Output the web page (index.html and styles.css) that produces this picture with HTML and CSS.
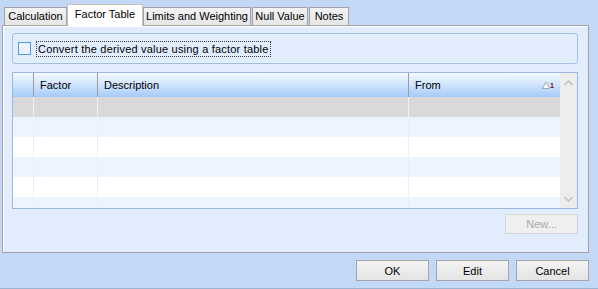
FILE: index.html
```html
<!DOCTYPE html>
<html lang="en">
<head>
    <meta charset="UTF-8">
    <title>Factor Table</title>
    <link rel="stylesheet" href="styles.css">
</head>
<body>
    <div class="window">
        <div class="tabs">
            <div class="tab tab-calc">Calculation</div>
            <div class="tab tab-factor selected">Factor Table</div>
            <div class="tab tab-limits">Limits and Weighting</div>
            <div class="tab tab-null">Null Value</div>
            <div class="tab tab-notes">Notes</div>
        </div>

        <div class="panel">
            <div class="group-box">
                <span class="check"></span>
                <span class="check-label">Convert the derived value using a factor table</span>
            </div>

            <div class="grid">
                <div class="grid-main">
                    <div class="grid-row grid-head">
                        <div class="cell"></div>
                        <div class="cell">Factor</div>
                        <div class="cell">Description</div>
                        <div class="cell cell-sort">
                            <span>From</span>
                            <span class="sort-mark">
                                <svg width="8" height="8" viewBox="0 0 8 8"><path d="M0.5 7.5 L4 1 L7.5 7.5 Z" fill="#fff" stroke="#a8a8a8" stroke-width="1"/></svg><span class="sort-num">1</span>
                            </span>
                        </div>
                    </div>
                    <!-- body rows -->
                    <div class="grid-row row-current"><div class="cell"></div><div class="cell"></div><div class="cell"></div><div class="cell"></div></div>
                    <div class="grid-row row-alt"><div class="cell"></div><div class="cell"></div><div class="cell"></div><div class="cell"></div></div>
                    <div class="grid-row"><div class="cell"></div><div class="cell"></div><div class="cell"></div><div class="cell"></div></div>
                    <div class="grid-row row-alt"><div class="cell"></div><div class="cell"></div><div class="cell"></div><div class="cell"></div></div>
                    <div class="grid-row"><div class="cell"></div><div class="cell"></div><div class="cell"></div><div class="cell"></div></div>
                    <div class="grid-row row-alt"><div class="cell"></div><div class="cell"></div><div class="cell"></div><div class="cell"></div></div>
                </div>
                <div class="vscroll">
                    <svg width="9" height="6" viewBox="0 0 9 6"><path d="M0.5 5 L4.5 1 L8.5 5" fill="none" stroke="#c3c3c3" stroke-width="1.6"/></svg>
                    <svg width="9" height="6" viewBox="0 0 9 6"><path d="M0.5 1 L4.5 5 L8.5 1" fill="none" stroke="#c3c3c3" stroke-width="1.6"/></svg>
                </div>
            </div>

            <div class="new-row">
                <button class="btn-new" disabled>New...</button>
            </div>
        </div>

        <div class="footer">
            <button class="btn">OK</button>
            <button class="btn">Edit</button>
            <button class="btn">Cancel</button>
        </div>
    </div>
</body>
</html>
```

FILE: styles.css
```css
body {
    margin: 0;
    background-color: #c3d8f7;
    font-family: "Liberation Sans", Arial, sans-serif;
    font-size: 11px;
    color: #000000;
}

.window {
    height: 289px;
    box-sizing: border-box;
    border-bottom: 1px solid #9bb3d0;
}

/* Tab strip */
.tabs {
    display: flex;
    align-items: flex-end;
    height: 25px;
    box-sizing: border-box;
    padding-left: 4px;
}

.tab {
    height: 18px;
    box-sizing: border-box;
    border: 1px solid #a3a3a3;
    border-bottom: none;
    background: linear-gradient(#f3f3f3, #e6e6e6);
    text-align: center;
    line-height: 17px;
}

.tab.selected {
    height: 22px;
    margin-bottom: -1px;
    background: #ffffff;
    border-color: #c2c2c2;
    line-height: 19px;
    position: relative;
    z-index: 1;
}

.tab-calc { width: 63px; }
.tab-factor { width: 76px; }
.tab-limits { width: 108px; }
.tab-null { width: 56px; margin-left: 1px; }
.tab-notes { width: 40px; margin-left: 1px; }

/* Tab page */
.panel {
    margin: 0 9px 0 2px;
    height: 228px;
    box-sizing: border-box;
    border: 1px solid #a3a3a3;
    box-shadow: inset 1px 1px 0 #ffffff;
    background-color: #e1edfd;
    padding: 7px 10px 0 9px;
}

.group-box {
    height: 31px;
    box-sizing: border-box;
    border: 1px solid #a6c0e4;
    border-radius: 3px;
    display: flex;
    align-items: center;
    padding-left: 5px;
}

.check {
    width: 13px;
    height: 13px;
    box-sizing: border-box;
    border: 1px solid #4f9de4;
    background-color: #eaf3fe;
}

.check-label {
    margin-left: 5px;
    padding: 0 1px;
    line-height: 14px;
    border: 1px dotted #3a3a3a;
    letter-spacing: 0.2px;
}

/* Grid */
.grid {
    margin-top: 8px;
    height: 137px;
    box-sizing: border-box;
    border: 1px solid #9bb9e0;
    background-color: #edf4fe;
    display: flex;
    overflow: hidden;
}

.grid-main {
    flex: 1;
}

.grid-row {
    display: grid;
    grid-template-columns: 21px 64px 311px 151px;
    height: 20px;
}

.grid-row .cell {
    border-right: 1px solid #e8f0fc;
}

.grid-row .cell:last-child {
    border-right: none;
}

.grid-row.row-alt {
    background-color: #edf4fe;
}

.grid-row:not(.row-alt) {
    background-color: #ffffff;
}

.grid-row.row-current {
    background-color: #d9d9d9;
}

.grid-row.row-current .cell {
    border-right-color: #f2f2f2;
}

.grid-row.grid-head {
    height: 24px;
    background: linear-gradient(#f4f9ff 0%, #d2e6fd 45%, #a5cafa 100%);
}

.grid-head .cell {
    border-right: 1px solid #9c9c9c;
    padding-left: 6px;
    line-height: 24px;
}

.grid-head .cell:first-child {
    padding-left: 0;
}

.cell-sort {
    display: flex;
    justify-content: space-between;
    padding-right: 6px;
}

.sort-mark {
    display: flex;
    align-items: flex-end;
    height: 16px;
}

.sort-num {
    font-size: 7px;
    line-height: 7px;
    color: #5a1030;
    font-weight: bold;
}

.vscroll {
    width: 17px;
    background-color: #ededed;
    display: flex;
    flex-direction: column;
    align-items: center;
    justify-content: space-between;
    padding: 7px 0 6px;
    box-sizing: border-box;
}

/* Buttons */
.new-row {
    display: flex;
    justify-content: flex-end;
    margin-top: 5px;
}

.btn-new {
    width: 73px;
    height: 20px;
    border: 1px solid #d5d5d5;
    background-color: #efefef;
    color: #a9a9a9;
    font-family: inherit;
    font-size: 11px;
    padding: 0;
}

.footer {
    display: flex;
    justify-content: flex-end;
    gap: 7px;
    padding: 7px 9px 0 0;
}

.btn {
    width: 73px;
    height: 21px;
    border: 1px solid #a5a5a5;
    background: linear-gradient(#f3f3f3, #e4e4e4);
    font-family: inherit;
    font-size: 11px;
    color: #000000;
    padding: 0;
}
```
